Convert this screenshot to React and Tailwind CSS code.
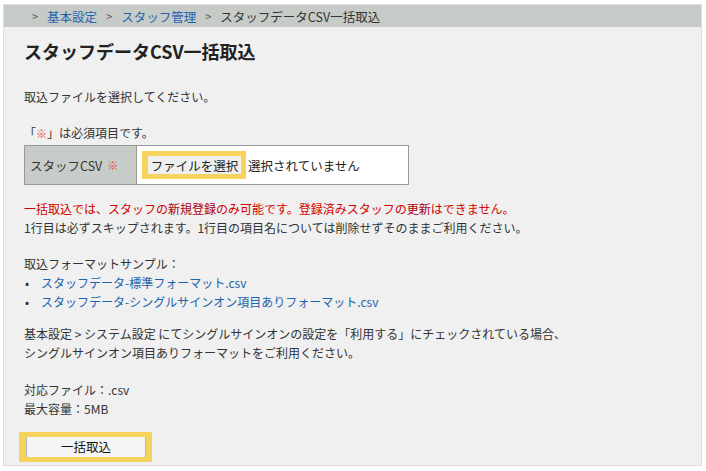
import React from 'react';

const font = { fontFamily: '"Noto Sans CJK JP", "Noto Sans", sans-serif' };

const Crumb = ({ children, link }) => (
  <span className={link ? 'text-[#1d64ad]' : 'text-[#333]'}>{children}</span>
);

const Sep = () => <span className="mx-[9px] text-[#555] text-[11px]">&gt;</span>;

const App = () => {
  return (
    <div className="w-[706px] h-[471px] bg-white pt-[4px] pl-[3px]" style={font}>
      <div className="w-[699px] h-[462px] border border-[#dcdddc] bg-[#eff0ef] text-[12px] text-[#333] leading-[19px]">
        <div className="h-[22px] bg-[#c7cbc7] flex items-center pl-[19px] pt-[1px] text-[12.5px]">
          <Sep />
          <Crumb link>基本設定</Crumb>
          <Sep />
          <Crumb link>スタッフ管理</Crumb>
          <Sep />
          <Crumb>スタッフデータCSV一括取込</Crumb>
        </div>

        <div className="pl-[20px]">
          <h1 className="mt-[12px] text-[18px] leading-[24px] font-bold text-[#222]">スタッフデータCSV一括取込</h1>

          <p className="mt-[24px]">取込ファイルを選択してください。</p>

          <p className="mt-[17px]">
            「<span className="text-[#e8463c] text-[11px]">※</span>」は必須項目です。
          </p>

          <div className="mt-[2px] w-[385px] h-[40px] flex border border-[#9a9a9a]">
            <div className="w-[112px] bg-[#c8ccc8] border-r border-[#9a9a9a] flex items-center pl-[5px] text-[12.5px]">
              スタッフCSV <span className="ml-[5px] text-[#e8463c] text-[11px]">※</span>
            </div>
            <div className="flex-1 bg-white flex items-center pl-[5px] text-[12.5px]">
              <div className="bg-[#f6d35b] p-[5px] pl-[6px] flex">
                <span className="bg-[#efefef] h-[18px] w-[93px] flex items-center justify-center text-[#222]">ファイルを選択</span>
              </div>
              <span className="ml-[2px] text-[#222]">選択されていません</span>
            </div>
          </div>

          <div className="mt-[14px]">
            <p className="text-[#d40000]">
              一括取込では、スタッフの<span className="text-[#a80018]">新規登録</span>のみ可能です。登録済みスタッフの<span className="text-[#a80018]">更新</span>はできません。
            </p>
            <p>1行目は必ずスキップされます。1行目の項目名については削除せずそのままご利用ください。</p>
          </div>

          <div className="mt-[17px]">
            <p>取込フォーマットサンプル：</p>
            <ul>
              <li className="flex">
                <span className="w-[17px] pl-[1px]">•</span>
                <span className="text-[#1d64ad]">スタッフデータ-標準フォーマット.csv</span>
              </li>
              <li className="flex">
                <span className="w-[17px] pl-[1px]">•</span>
                <span className="text-[#1d64ad]">スタッフデータ-シングルサインオン項目ありフォーマット.csv</span>
              </li>
            </ul>
          </div>

          <div className="mt-[13px]">
            <p>基本設定 &gt; システム設定 にてシングルサインオンの設定を「利用する」にチェックされている場合、</p>
            <p>シングルサインオン項目ありフォーマットをご利用ください。</p>
          </div>

          <div className="mt-[18px]">
            <p>対応ファイル：.csv</p>
            <p>最大容量：5MB</p>
          </div>

          <div className="mt-[14px] -ml-[5px] w-[133px] h-[30px] bg-[#f6d35b] p-[5px] pl-[7px]">
            <button className="w-[120px] h-[20px] bg-[#f4f5f4] border-x border-[#b5b5b5] text-[12.5px] leading-[20px] text-[#111] flex items-center justify-center">
              一括取込
            </button>
          </div>
        </div>
      </div>
    </div>
  );
};

export default App;
